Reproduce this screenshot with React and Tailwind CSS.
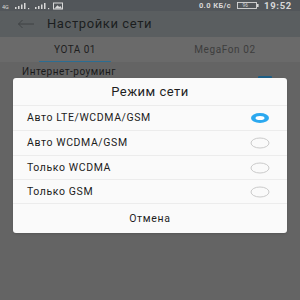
import React from "react";

const options = [
  { label: "Авто LTE/WCDMA/GSM", selected: true },
  { label: "Авто WCDMA/GSM", selected: false },
  { label: "Только WCDMA", selected: false },
  { label: "Только GSM", selected: false },
];

const Radio = ({ selected }) => (
  <svg width="20" height="12" viewBox="0 0 20 12">
    {selected ? (
      <>
        <ellipse cx="10" cy="6" rx="9" ry="5" fill="#2ba8ef" />
        <ellipse cx="10" cy="6" rx="4.5" ry="2" fill="#ffffff" />
      </>
    ) : (
      <ellipse cx="10" cy="6" rx="9" ry="5" fill="none" stroke="#c4c4c4" strokeWidth="0.9" />
    )}
  </svg>
);

const StatusBar = () => (
  <div className="h-[11px] bg-[#52565a] flex items-center justify-between pl-[2px] pr-[8px] text-[#d8d8d8]">
    <svg width="62" height="8" viewBox="0 0 62 8" fill="#d8d8d8">
      <text x="0" y="7" fontSize="5.5" fontFamily="Roboto, sans-serif">4G</text>
      <rect x="13" y="5" width="1.5" height="2" />
      <rect x="16" y="4" width="1.5" height="3" />
      <rect x="19" y="2.5" width="1.5" height="4.5" />
      <rect x="22" y="1" width="1.5" height="6" />
      <rect x="26" y="6" width="1.2" height="1.2" />
      <rect x="33" y="5" width="1.5" height="2" />
      <rect x="36" y="4" width="1.5" height="3" />
      <rect x="39" y="2.5" width="1.5" height="4.5" />
      <rect x="42" y="1" width="1.5" height="6" />
      <rect x="46" y="6" width="1.2" height="1.2" />
      <rect x="51.5" y="1" width="9" height="6" fill="none" stroke="#d8d8d8" strokeWidth="1" />
      <path d="M52.5 6.5 L55.5 3.2 L57.2 5 L58.3 4 L60 6.5 Z" />
    </svg>
    <div className="flex items-center">
      <span className="text-[7.5px] font-bold leading-none tracking-[0.4px]">0.0 КБ/с</span>
      <svg className="ml-[6px]" width="22" height="7" viewBox="0 0 22 7">
        <rect x="0.5" y="0.5" width="19" height="6" fill="none" stroke="#d8d8d8" strokeWidth="0.9" />
        <rect x="20" y="2" width="1.6" height="3" fill="#d8d8d8" />
        <text x="5.5" y="5.4" fontSize="4.8" fill="#d8d8d8" fontFamily="Roboto, sans-serif">96</text>
      </svg>
      <span className="ml-[5px] text-[9.5px] font-bold leading-none tracking-[0.7px]">19:52</span>
    </div>
  </div>
);

export default function App() {
  return (
    <div
      className="w-[300px] h-[300px] relative overflow-hidden bg-[#646464]"
      style={{ fontFamily: "Roboto, 'Liberation Sans', sans-serif" }}
    >
      <StatusBar />

      <div className="h-[26px] bg-[#5a5e60] flex items-center pl-[17px]">
        <svg width="18" height="10" viewBox="0 0 18 10">
          <path d="M17 5 H1.5 M5.5 1 L1.5 5 L5.5 9" fill="none" stroke="#3c4042" strokeWidth="0.9" />
        </svg>
        <span className="ml-[12px] text-[13px] text-[#1c1e20] tracking-[0.6px]">Настройки сети</span>
      </div>

      <div className="h-[25px] bg-[#6a6a6a] flex">
        <div className="w-[150px] flex flex-col items-center">
          <span className="flex-1 flex items-center text-[10px] text-[#1e1e1e] tracking-[0.5px] pt-[1px]">
            YOTA 01
          </span>
          <div className="w-[72px] h-[1.5px] bg-[#2c6d92]" />
        </div>
        <div className="w-[150px] flex items-center justify-center text-[10px] text-[#3d3d3d] tracking-[0.6px]">
          MegaFon 02
        </div>
      </div>

      <div className="flex items-start justify-between pl-[22px] pr-[28px] pt-[4px]">
        <span className="text-[10px] text-[#1a1a1a] tracking-[0.5px] leading-[12px]">
          Интернет-роуминг
        </span>
        <div className="mt-[10px] w-[14px] h-[5px] bg-[#1e5f86] rounded-[1px]" />
      </div>

      <div className="absolute left-[13px] top-[78px] w-[274px] bg-[#fafafa] rounded-[3px] shadow">
        <div className="h-[28px] flex items-center justify-center text-[13px] text-[#1f1f1f] tracking-[0.5px] border-b border-[#ececec]">
          Режим сети
        </div>
        {options.map((o, i) => (
          <div
            key={o.label}
            className={
              "flex items-center justify-between pl-[14px] pr-[17px] border-b border-[#ececec] " +
              (i < 2 ? "h-[25px]" : "h-[24px]")
            }
          >
            <span className="text-[10.5px] text-[#1c1c1c] tracking-[0.6px]">{o.label}</span>
            <Radio selected={o.selected} />
          </div>
        ))}
        <div className="h-[29px] flex items-center justify-center text-[10.5px] text-[#1f1f1f] tracking-[0.7px]">
          Отмена
        </div>
      </div>
    </div>
  );
}
